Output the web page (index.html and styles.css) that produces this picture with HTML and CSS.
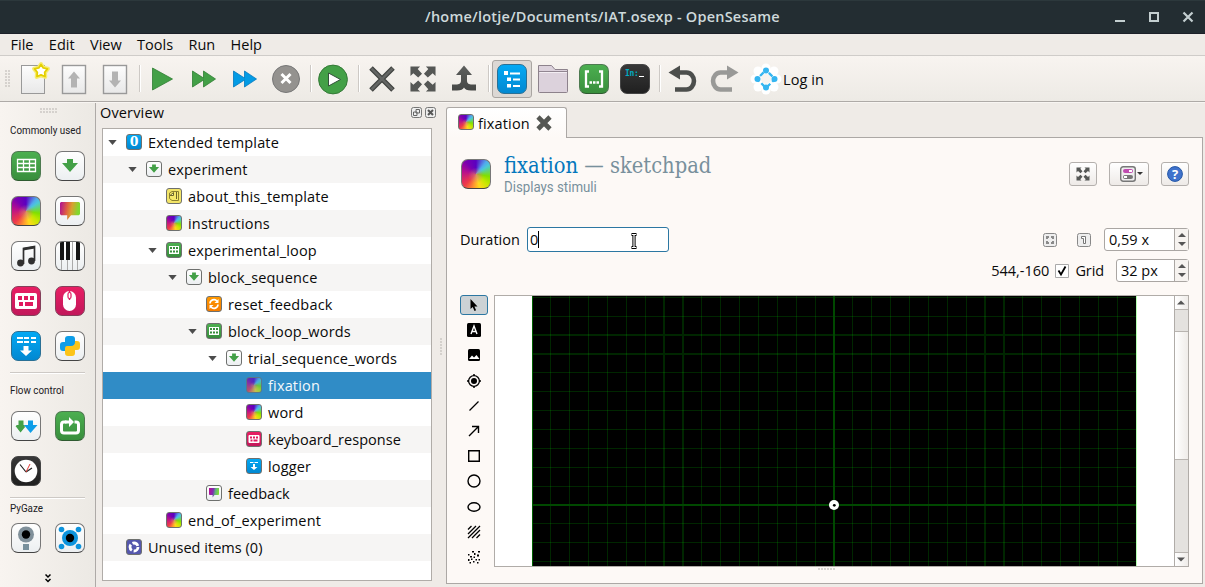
FILE: index.html
```html
<!DOCTYPE html>
<html lang="en">
<head>
<meta charset="utf-8">
<title>OpenSesame</title>
<link rel="stylesheet" href="styles.css">
</head>
<body>
<svg class="defs" width="0" height="0">
  <defs>
    <linearGradient id="steel" x1="0" y1="0" x2="0" y2="1"><stop offset="0" stop-color="#5d5f5d"/><stop offset="1" stop-color="#464846"/></linearGradient>
    <linearGradient id="page" x1="0" y1="0" x2="0" y2="1"><stop offset="0" stop-color="#fdfdfd"/><stop offset="1" stop-color="#e8e8e8"/></linearGradient>
    <symbol id="i-down" viewBox="0 0 28 28"><path d="M11 7h6v4h5l-8 9-8-9h5z" fill="#43a047"/></symbol>
    <symbol id="i-table" viewBox="0 0 28 28"><path d="M5.500 7.500h18v12h-18zM5.500 11.500h18M5.500 15.500h18M11.500 7v12.500M17.500 7v12.500" fill="none" stroke="#fff" stroke-width="1.300"/></symbol>
    <symbol id="i-keys" viewBox="0 0 28 28"><rect x="3" y="6" width="22" height="16" rx="2" fill="#fff"/><path d="M6 9h4v4H6zM12 9h4v4h-4zM18 9h4v4h-4zM7 15h4v4H7zM13 15h8v4h-8z" fill="#e0195e"/></symbol>
    <symbol id="i-log" viewBox="0 0 28 28"><path d="M5 6h6M12 6h5M19 6h5M5 10h6M12 10h5M19 10h5" stroke="#fff" stroke-width="2"/><path d="M11.500 14h5v4.500h3.500l-6 5.500-6-5.500h3.500z" fill="#fff"/></symbol>
    <symbol id="i-expand" viewBox="0 0 28 28"><path d="M1 1h10L8.500 3.500l4.500 5-4 4-5-4.500L1 11zM27 1v10l-3-3-5 4.500-4-4 4.500-5L17 1zM1 27V17l3 3 5-4.500 4 4-4.500 5L11 27zM27 27H17l2.500-2.500-4.500-5 4-4 5 4.500 3-3z" fill="#555755"/></symbol>
    <symbol id="i-tri" viewBox="0 0 10 6"><path d="M0 0h10L5 6z" fill="#4c4c4c"/></symbol>
  </defs>
</svg>

<header class="titlebar">
  <div class="title">/home/lotje/Documents/IAT.osexp - OpenSesame</div>
  <svg class="winbtns" width="80" height="34"><path d="M0 21h10" stroke="#c3ced0" stroke-width="2"/><path d="M35 13h8v8h-8z" fill="none" stroke="#c3ced0" stroke-width="2"/><path d="M68.500 12.500l9 9M77.500 12.500l-9 9" stroke="#c3ced0" stroke-width="2.200"/></svg>
</header>

<nav class="menubar"><span>File</span><span>Edit</span><span>View</span><span>Tools</span><span>Run</span><span>Help</span></nav>

<div class="toolbar">
  <div class="handle dots"></div>
  <svg class="tb" viewBox="0 0 41 38"><rect x="7.500" y="5.500" width="23" height="28" fill="url(#page)" stroke="#999"/><path d="M27 4l2.500 3.800 4.500 1-3 3.600.3 4.600-4.300-1.700-4.300 1.700.3-4.600-3-3.600 4.500-1z" fill="#fffde8" stroke="#f7ec70" stroke-width="4" stroke-linejoin="round"/><path d="M27 4.500l2.300 3.400 4.200 1-2.800 3.400.3 4.200-4-1.600-4 1.600.3-4.200-2.800-3.400 4.200-1z" fill="#fff" stroke="#e4cf00" stroke-width="1.800" stroke-linejoin="round"/></svg>
  <svg class="tb" viewBox="0 0 41 38"><rect x="7.500" y="5.500" width="23" height="28" fill="url(#page)" stroke="#999" stroke-width="1.400"/><path d="M19 11.500l6 7h-3v9h-6v-9h-3z" fill="#b3b3b3"/></svg>
  <svg class="tb" viewBox="0 0 41 38"><rect x="7.500" y="5.500" width="23" height="28" fill="url(#page)" stroke="#999" stroke-width="1.400"/><path d="M19 27.500l6-7h-3v-9h-6v9h-3z" fill="#b3b3b3"/></svg>
  <div class="sep s5"></div>
  <svg class="tb" viewBox="0 0 41 38"><path d="M10.500 8v22l20-11z" fill="#43a047" stroke="#2e7d32" stroke-width=".8"/></svg>
  <svg class="tb" viewBox="0 0 41 38"><path d="M9.500 11v16l11-7v7l12-8-12-8v7z" fill="#43a047" stroke="#2e7d32" stroke-width=".8"/></svg>
  <svg class="tb" viewBox="0 0 41 38"><path d="M9.500 11v16l11-7v7l12-8-12-8v7z" fill="#039be5" stroke="#0277bd" stroke-width=".8"/></svg>
  <svg class="tb" viewBox="0 0 41 38"><circle cx="21" cy="19" r="13.500" fill="#94928f" stroke="#777"/><path d="M16.500 14l9 9M25.500 14l-9 9" stroke="#fff" stroke-width="3"/></svg>
  <div class="sep"></div>
  <svg class="tb" viewBox="0 0 41 38"><circle cx="20" cy="19.500" r="14.400" fill="#43a047" stroke="#357a38"/><path d="M15.500 13v13l12-6.500z" fill="#fff" stroke="#34513b"/></svg>
  <div class="sep"></div>
  <svg class="tb" viewBox="0 0 41 38"><path d="M10 8l22 22M32 8L10 30" stroke="#3e403e" stroke-width="5"/><path d="M10.500 8.500l21 21M31.500 8.500l-21 21" stroke="#636563" stroke-width="2.600"/></svg>
  <svg class="tb" viewBox="0 0 41 38"><use href="#i-expand" x="7.500" y="5.500" width="27" height="27"/></svg>
  <svg class="tb" viewBox="0 0 41 38"><path d="M21 5.500l8 9.500h-5v5.500c0 3 2 4 5 4h4v6h-5c-4 0-6-1-7-3-1 2-3 3-7 3H9v-6h4c3 0 5-1 5-4V15h-5z" fill="url(#steel)"/></svg>
  <div class="sep"></div>
  <div class="tb pressed"><div class="tile blue"><svg viewBox="0 0 28 28"><path d="M6 6h4v4H6zM9 12.500h4v3.500H9zM9 19h4v3.500H9z" fill="#fff"/><path d="M12 8.500h10M15 14.500h7M15 21h7" stroke="#fff" stroke-width="1.800"/></svg></div></div>
  <svg class="tb" viewBox="0 0 41 38"><path d="M6.500 5.500h13l3.500 4h12.500v22q0 1-1 1h-27q-1 0-1-1z" fill="#dcd2dc" stroke="#8d828c"/><path d="M7 11.500h28" stroke="#918691"/><path d="M7.500 12.500h27.500" stroke="#f3eef3"/></svg>
  <div class="tb"><div class="tile green"><svg viewBox="0 0 28 28"><path d="M9 6.500H6v15h3M19 6.500h3v15h-3" fill="none" stroke="#fff" stroke-width="2.300"/><path d="M9.500 17.500h2.500M13 17.500h2.500M16.500 17.500h2.500" stroke="#fff" stroke-width="2.500"/></svg></div></div>
  <div class="tb"><div class="tile black prompt"><span>In:</span><i></i></div></div>
  <div class="sep"></div>
  <svg class="tb" viewBox="0 0 41 38"><path d="M17 12.500h7.500a7 8 0 0 1 0 17H13" fill="none" stroke="#4c4e4c" stroke-width="4.600"/><path d="M6.500 12.500L18 5.500v14z" fill="#4c4e4c"/></svg>
  <svg class="tb" viewBox="0 0 41 38"><path d="M25 12.500h-7.500a7 8 0 0 0 0 17H29" fill="none" stroke="#999997" stroke-width="4.600"/><path d="M35.500 12.500L24 5.500v14z" fill="#999997"/></svg>
  <svg class="tb osf" viewBox="0 0 41 38"><g fill="#fff"><circle cx="22" cy="19" r="11"/><circle cx="22" cy="8" r="4.500"/><circle cx="22" cy="30" r="4.500"/><circle cx="11" cy="19" r="4.500"/><circle cx="33" cy="19" r="4.500"/><circle cx="14" cy="11" r="4.500"/><circle cx="30" cy="11" r="4.500"/><circle cx="14" cy="27" r="4.500"/><circle cx="30" cy="27" r="4.500"/></g><circle cx="22" cy="19" r="5" fill="#f6f3ef"/><path d="M22 10l9 9-9 9-9-9z" fill="none" stroke="#35b5f0" stroke-width="2.300" stroke-dasharray="5 2.700" stroke-dashoffset="-4"/><g fill="#35b5f0"><circle cx="22" cy="10.500" r="3"/><circle cx="22" cy="27.500" r="3"/><circle cx="13.500" cy="19" r="3"/><circle cx="30.500" cy="19" r="3"/></g></svg>
  <span class="login">Log in</span>
</div>

<main class="body">
  <aside class="toolbox">
    <div class="dots wide"></div>
    <div class="label"><span>Commonly used</span></div>
    <div class="tiles">
      <div class="tile green"><svg viewBox="0 0 28 28"><use href="#i-table"/></svg></div>
      <div class="tile white"><svg viewBox="0 0 28 28"><use href="#i-down"/></svg></div>
      <div class="tile rainbow"></div>
      <div class="tile white"><div class="bubble"></div></div>
      <div class="tile white"><svg viewBox="0 0 28 28"><path d="M11.500 22V6.500l11-2V19" fill="none" stroke="#303030" stroke-width="1.700"/><path d="M11 6l12-2v2.500L11 8.500z" fill="#303030"/><circle cx="8.500" cy="21" r="3.400" fill="#303030"/><circle cx="19.500" cy="19" r="3.400" fill="#303030"/></svg></div>
      <div class="tile white"><svg viewBox="0 0 28 28"><path d="M5.500 18v10M11.500 18v10M16.500 0v28M21.500 18v10" stroke="#aaa"/><path d="M4 0h4v18H4zM10 0h4v18h-4zM20 0h4v18h-4z" fill="#151515"/></svg></div>
      <div class="tile pink"><svg viewBox="0 0 28 28"><use href="#i-keys"/></svg></div>
      <div class="tile pink"><svg viewBox="0 0 28 28"><rect x="7" y="4" width="13" height="20" rx="6.500" fill="#fff"/><path d="M13.500 3v10" stroke="#e0195e" stroke-width="1.400"/><rect x="12" y="5.500" width="3" height="6" rx="1.500" fill="#fff" stroke="#e0195e" stroke-width="1.200"/></svg></div>
      <div class="tile blue"><svg viewBox="0 0 28 28"><use href="#i-log"/></svg></div>
      <div class="tile white"><svg viewBox="0 0 28 28"><path d="M9 7q0-3 3-3h4q3 0 3 3v5q0 2-2 2h-3q-2 0-2 2v3H7q-3 0-3-3v-3q0-3 3-3h2z" fill="#0d9de8"/><path d="M19 9h2q3 0 3 3v3q0 3-3 3h-2v3q0 3-3 3h-4q-3 0-3-3v-5q0-2 2-2h4q4 0 4-4z" fill="#fcc419"/></svg></div>
    </div>
    <hr>
    <div class="label flow"><span>Flow control</span></div>
    <div class="tiles">
      <div class="tile white"><svg viewBox="0 0 28 28"><path d="M6.500 8.500h5V14l2 .500-5 6-5-6.500h3z" fill="#43a047"/><path d="M4 13h9l-4.500 7z" fill="#43a047"/><path d="M16 8.500h5V13h4.500L18.500 21l-6.500-8h4z" fill="#0d9de8"/></svg></div>
      <div class="tile green"><svg viewBox="0 0 28 28"><path d="M10.500 10H8q-2.500 0-2.500 2.500v6Q5.500 21 8 21h12q2.500 0 2.500-2.500v-6Q22.500 10 20 10h-1.500" fill="none" stroke="#fff" stroke-width="3"/><path d="M9 8.500h4V5l5 5-5 5v-3.500H9z" fill="#fff"/></svg></div>
      <div class="tile black"><svg viewBox="0 0 28 28"><circle cx="14" cy="14" r="11.300" fill="#fff"/><path d="M14 15L8 7.500M14 15l6-4" stroke="#222" stroke-width="1.200"/><path d="M14 15l4-8" stroke="#e53935"/></svg></div>
    </div>
    <hr class="second">
    <div class="label pygaze"><span>PyGaze</span></div>
    <div class="tiles">
      <div class="tile white"><svg viewBox="0 0 28 28"><circle cx="14" cy="10.500" r="8" fill="#80909a"/><circle cx="14" cy="10.500" r="4.200"/><path d="M11 20h6v6h-6z" fill="#78909c"/></svg></div>
      <div class="tile white"><svg viewBox="0 0 28 28"><g fill="#0d93dc"><circle cx="14" cy="14" r="8"/><circle cx="5.500" cy="5.500" r="2.800"/><circle cx="22.500" cy="5.500" r="2.800"/><circle cx="5.500" cy="22.500" r="2.800"/><circle cx="22.500" cy="22.500" r="2.800"/></g><circle cx="14" cy="14" r="4.200"/></svg></div>
    </div>
    <svg class="more" width="6" height="9"><path d="M.5 .5L3 3 5.500 .5M.5 5L3 7.500 5.500 5" fill="none" stroke="#000" stroke-width="1.500"/></svg>
  </aside>

  <section class="overview">
    <div class="dock"><span>Overview</span>
      <svg width="26" height="12"><g fill="#eee" stroke="#777"><rect x=".5" y=".5" width="10" height="10" rx="2"/><rect x="14.500" y=".5" width="10" height="10" rx="2"/></g><path d="M5 2.500h3.500V6H5zM2.500 5H6v3.500H2.500z" fill="none" stroke="#666"/><path d="M17 3l5 5M22 3l-5 5" stroke="#555" stroke-width="2"/></svg>
    </div>
    <div class="tree">
      <div class="row l0"><svg class="tri"><use href="#i-tri"/></svg><div class="mini blue"><b>0</b></div><span>Extended template</span></div>
      <div class="row l1"><svg class="tri"><use href="#i-tri"/></svg><div class="mini white"><svg viewBox="3 3 22 22"><use href="#i-down" width="28" height="28"/></svg></div><span>experiment</span></div>
      <div class="row l2"><i class="tri"></i><div class="mini note"><svg viewBox="0 0 14 14"><path d="M2.500 4L5 2.500h6.500v9H5L2.500 9.500z" fill="#f6e96b" stroke="#8c812f"/><path d="M3 6.500l3.500-3v3zM9.500 3v7" fill="#fff9b0" stroke="#6d6528"/></svg></div><span>about_this_template</span></div>
      <div class="row l2"><i class="tri"></i><div class="mini rainbow"></div><span>instructions</span></div>
      <div class="row l2"><svg class="tri"><use href="#i-tri"/></svg><div class="mini green"><svg viewBox="0 0 14 14"><path d="M2 3h10v8H2z" fill="#fff"/><path d="M3 4h2v2H3zM6 4h2v2H6zM9 4h2v2H9zM3 7.500h2v2H3zM6 7.500h2v2H6zM9 7.500h2v2H9z" fill="#388e3c"/></svg></div><span>experimental_loop</span></div>
      <div class="row l3"><svg class="tri"><use href="#i-tri"/></svg><div class="mini white"><svg viewBox="3 3 22 22"><use href="#i-down" width="28" height="28"/></svg></div><span>block_sequence</span></div>
      <div class="row l4"><i class="tri"></i><div class="mini orange"><svg viewBox="0 0 14 14"><path d="M3 6.500A4 4 0 0 1 10 4M11 7.500A4 4 0 0 1 4 10" fill="none" stroke="#fff" stroke-width="1.600"/><path d="M11.500 2v4h-4zM2.500 12V8h4z" fill="#fff"/></svg></div><span>reset_feedback</span></div>
      <div class="row l4"><svg class="tri"><use href="#i-tri"/></svg><div class="mini green"><svg viewBox="0 0 14 14"><path d="M2 3h10v8H2z" fill="#fff"/><path d="M3 4h2v2H3zM6 4h2v2H6zM9 4h2v2H9zM3 7.500h2v2H3zM6 7.500h2v2H6zM9 7.500h2v2H9z" fill="#388e3c"/></svg></div><span>block_loop_words</span></div>
      <div class="row l5"><svg class="tri"><use href="#i-tri"/></svg><div class="mini white"><svg viewBox="3 3 22 22"><use href="#i-down" width="28" height="28"/></svg></div><span>trial_sequence_words</span></div>
      <div class="row l6 selected"><i class="tri"></i><div class="mini rainbow"></div><span>fixation</span></div>
      <div class="row l6"><i class="tri"></i><div class="mini rainbow"></div><span>word</span></div>
      <div class="row l6"><i class="tri"></i><div class="mini pink"><svg viewBox="0 0 28 28"><use href="#i-keys"/></svg></div><span class="tight">keyboard_response</span></div>
      <div class="row l6"><i class="tri"></i><div class="mini blue"><svg viewBox="0 0 14 14"><path d="M3 3.500h3.500M7.500 3.500H11" stroke="#fff"/><path d="M6 5h2v3h2.500L7 11 3.500 8H6z" fill="#fff"/></svg></div><span>logger</span></div>
      <div class="row l4"><i class="tri"></i><div class="mini white"><div class="bubble small"></div></div><span class="tight">feedback</span></div>
      <div class="row l2"><i class="tri"></i><div class="mini rainbow"></div><span>end_of_experiment</span></div>
      <div class="row l0"><i class="tri"></i><div class="mini indigo"><svg viewBox="0 0 14 14"><circle cx="7" cy="7" r="4" fill="none" stroke="#fff" stroke-width="2.800" stroke-dasharray="6.500 1.880"/></svg></div><span class="tight">Unused items (0)</span></div>
    </div>
  </section>

  <div class="splitter"><div class="dots"></div></div>

  <section class="editor">
    <div class="tab"><div class="mini rainbow"></div><span>fixation</span><svg width="16" height="16"><path d="M2 2l12 12M14 2L2 14" stroke="#555753" stroke-width="4.600"/></svg></div>
    <div class="pane">
      <div class="head">
        <div class="tile rainbow"></div>
        <div class="heading">
          <h1><b>fixation</b> — sketchpad</h1>
          <p>Displays stimuli</p>
        </div>
        <div class="btn"><svg width="14" height="14"><use href="#i-expand"/></svg></div>
        <div class="btn drop"><svg width="31" height="16"><rect x=".7" y=".7" width="14.600" height="14.600" rx="2.500" fill="#eee" stroke="#777" stroke-width="1.400"/><rect x="3" y="3" width="10" height="4" rx="2" fill="#c04cb0"/><rect x="9" y="4" width="3" height="2" fill="#fff"/><rect x="3" y="9" width="10" height="4" rx="2" fill="#777"/><rect x="4" y="10" width="3" height="2" fill="#fff"/><path d="M17 6h6l-3 3z" fill="#333"/></svg></div>
        <div class="btn"><svg width="16" height="16"><circle cx="8" cy="8" r="7.400" fill="#3f72cc" stroke="#2457a6"/><text x="8" y="13" text-anchor="middle" class="q">?</text></svg></div>
      </div>
      <div class="line1">
        <span class="dur">Duration</span>
        <div class="input"><span>0</span><i></i><svg class="ibeam" width="8" height="16"><path d="M1.500 1.500H6.500M1.500 14.500H6.500M4 2v12" stroke="#000" stroke-width="3.200"/><path d="M2 1.500h4M2 14.500h4M4 2v12" stroke="#fff" stroke-width="1.200"/></svg></div>
        <div class="grow"></div>
        <svg class="fit" width="14" height="14"><rect x=".5" y=".5" width="13" height="13" rx="2" fill="#eee" stroke="#888"/><path d="M3 3h3v3H3zM8 3h3v3H8zM3 8h3v3H3zM8 8h3v3H8z" fill="#8a8a8a"/><path d="M5 5h1v1H5zM8 5h1v1H8zM5 8h1v1H5zM8 8h1v1H8z" fill="#eee"/></svg>
        <svg class="one" width="14" height="14"><rect x=".5" y=".5" width="13" height="13" rx="2" fill="#eee" stroke="#888"/><path d="M4.500 3.500h4v7h-2v-5h-2z" fill="#fff" stroke="#777"/></svg>
        <div class="spin zoomspin"><span>0,59 x</span><div class="arrows"><svg><path d="M4 8h8L8 4zM4 13h8l-4 4z"/></svg></div></div>
      </div>
      <div class="line2">
        <span>544,-160</span>
        <svg width="14" height="14"><path d="M.5 .5h13v13H.5z" fill="#fff" stroke="#aaa"/><path d="M3.500 6.500L6 10.500 10.500 2.500" fill="none" stroke="#000" stroke-width="1.800"/></svg>
        <span class="gridlabel">Grid</span>
        <div class="spin"><span>32 px</span><div class="arrows"><svg><path d="M4 8h8L8 4zM4 13h8l-4 4z"/></svg></div></div>
      </div>
      <div class="work">
        <div class="tools">
          <div class="tool on"><svg viewBox="0 0 14 14"><path d="M3.500 1v10l2.200-2 1.800 4 1.600-.7L7.400 8.500h3.100z"/></svg></div>
          <div class="tool"><svg viewBox="0 0 14 14"><rect width="14" height="14" rx="1.500"/><path d="M4 11L7 3l3 8M5 8.500h4" fill="none" stroke="#fff" stroke-width="1.400"/></svg></div>
          <div class="tool"><svg viewBox="0 0 14 14"><rect x="1" y="1" width="12" height="12" rx="1.500"/><path d="M2 11l3-3.500 2 2L9.500 7l3 4z" fill="#fff"/></svg></div>
          <div class="tool"><svg viewBox="0 0 14 14"><circle cx="7" cy="7" r="5.400" fill="none" stroke="#000" stroke-width="1.300"/><circle cx="7" cy="7" r="3"/><path d="M7 0v2M7 12v2M0 7h2M12 7h2" stroke="#000" stroke-width="1.500"/></svg></div>
          <div class="tool"><svg viewBox="0 0 14 14"><path d="M2.500 11.500l9-9" stroke="#000" stroke-width="1.300"/></svg></div>
          <div class="tool"><svg viewBox="0 0 14 14"><path d="M2 12L11.500 2.500M5 2.500h6.500V9" fill="none" stroke="#000" stroke-width="1.400"/></svg></div>
          <div class="tool"><svg viewBox="0 0 14 14"><path d="M1.700 1.700h10.600v10.600H1.700z" fill="none" stroke="#000" stroke-width="1.400"/></svg></div>
          <div class="tool"><svg viewBox="0 0 14 14"><circle cx="7" cy="7" r="6" fill="none" stroke="#000" stroke-width="1.400"/></svg></div>
          <div class="tool"><svg viewBox="0 0 14 14"><ellipse cx="7" cy="7" rx="6" ry="4.300" fill="none" stroke="#000" stroke-width="1.400"/></svg></div>
          <div class="tool"><svg viewBox="0 0 14 14"><path d="M1 4.500L4.500 1M1 9l8-8M1 13L13 1M5 13l8-8M9.500 13L13 9.500" stroke="#000" stroke-width="1.300"/></svg></div>
          <div class="tool"><svg viewBox="0 0 14 14"><path d="M1 4h1.500v1.500H1zM5 1h2v1.500H5zM7 3h1.500v2H7zM11 1h2v1.500h-2zM3 6h2v1.500H3zM10 4.500h2v2h-2zM6.500 6.500H8V8H6.500zM1 9h1.500v2H1zM4 8.500h1.500V10H4zM8.500 9H10v1.500H8.500zM11.500 9H13v1.500h-1.500zM6 11h1.500v1.500H6zM2.500 12H4v1.500H2.500zM10 12h1.500v1.500H10z"/></svg></div>
        </div>
        <div class="view">
          <svg class="canvas" width="679" height="270" viewBox="495 296 679 270" shape-rendering="crispEdges">
            <rect x="495" y="296" width="679" height="270" fill="#fff"/>
            <rect x="532" y="296" width="604" height="270"/>
            <path d="M550.500 296v270M569.500 296v270M588.500 296v270M607.500 296v270M626.500 296v270M645.500 296v270M701.500 296v270M720.500 296v270M739.500 296v270M758.500 296v270M777.500 296v270M796.500 296v270M815.500 296v270M852.500 296v270M871.500 296v270M890.500 296v270M909.500 296v270M928.500 296v270M947.500 296v270M966.500 296v270M1022.500 296v270M1041.500 296v270M1060.500 296v270M1079.500 296v270M1098.500 296v270M1117.500 296v270" stroke="#00ff00" stroke-opacity=".15"/>
            <path d="M532 297.500h604M532 316.500h604M532 372.500h604M532 391.500h604M532 410.500h604M532 429.500h604M532 448.500h604M532 467.500h604M532 486.500h604M532 523.500h604M532 542.500h604M532 561.500h604" stroke="#00ff00" stroke-opacity=".15"/>
            <path d="M664 296v270M683 296v270M985 296v270M1004 296v270M532 335h604M532 354h604" stroke="#00ff00" stroke-opacity=".15" stroke-width="2"/>
            <path d="M834 296v270M532 505h604" stroke="#004800" stroke-width="2"/>
            <path d="M532.500 296v270" stroke="#006000"/><path d="M1136.500 296v270" stroke="#b4ffb0"/>
            <circle cx="834" cy="505" r="5" fill="#fff" shape-rendering="auto"/><circle cx="834.300" cy="505.300" r="1.400" shape-rendering="auto"/>
          </svg>
          <div class="scroll">
            <svg class="up" width="13" height="13"><path d="M2 8.500h8L6 4.500z" fill="#555"/></svg>
            <div class="gap"></div><div class="thumb"></div><div class="trough"></div>
            <svg class="down" width="13" height="13"><path d="M2 4.500h8L6 8.500z" fill="#555"/></svg>
          </div>
        </div>
      </div>
      <div class="dots bottom"></div>
    </div>
  </section>
</main>
</body>
</html>
```
FILE: styles.css
```css
* { box-sizing: border-box; }
html, body { margin: 0; height: 587px; overflow: hidden; }
body {
  display: flex; flex-direction: column; width: 1205px;
  background: #efebe7; color: #0a0a0a;
  font: 14.5px/20px "Open Sans", "Noto Sans", sans-serif;
}
svg { display: block; flex: none; }
.defs { position: absolute; }
.dots { background-image: radial-gradient(circle at 1px 1px, #c6c2be .6px, transparent .9px); background-size: 3px 3px; }

.titlebar { height: 34px; flex: none; display: flex; background: #232d32; border-top: 1px solid #2c383c; border-bottom: 1px solid #1c2029; color: #ced9db; }
.title { width: 1085px; padding-left: 120px; text-align: center; font-weight: 600; line-height: 32px; font-size: 14.5px; letter-spacing: .21px; }
.winbtns { margin: -1px 0 0 30px; }

.menubar { height: 22px; flex: none; display: flex; gap: 15.4px; padding-left: 10.5px; border-bottom: 1px solid #cfccc9; line-height: 21px; }

.toolbar { height: 46px; flex: none; display: flex; align-items: center; background: linear-gradient(#f8f4f0, #edeae5); border-bottom: 1px solid #aeaaa7; }
.handle { width: 5px; height: 17px; margin: 0 4px 0 5px; }
.tb { width: 41px; height: 38px; flex: none; }
div.tb { display: flex; align-items: center; justify-content: center; padding: 1px 0 0 1px; }
div.pressed { border: 1px solid #a9a5a1; border-radius: 3px; background: #dcd8d4; width: 40px; margin-left: 1px; padding: 1px 0 0; }
.sep { width: 7px; height: 27px; flex: none; background: linear-gradient(90deg, transparent 4px, #cdc9c5 4px, #cdc9c5 5px, #fff 5px, #fff 6px, transparent 6px); }
.s5 { width: 5px; background: linear-gradient(90deg, transparent 2px, #cdc9c5 2px, #cdc9c5 3px, #fff 3px, #fff 4px, transparent 4px); }
.login { margin-left: -2px; letter-spacing: .1px; padding-top: 2px; }

.tile { width: 30px; height: 30px; border: 1px solid #777; border-bottom-color: #444; border-radius: 7px; overflow: hidden; flex: none; }
.tile svg { width: 28px; height: 28px; }
.white { background: linear-gradient(#fff, #eceff1); }
.green { background: linear-gradient(#4caf50, #388e3c); border-color: #4d7a50; border-bottom-color: #2e5a30; }
.blue { background: linear-gradient(#03a9f4, #0288d1); border-color: #2a7095; }
.pink { background: linear-gradient(#e91e63, #c2185b); border-color: #84405a; }
.black { background: linear-gradient(#383838, #202020); border-color: #444; }
.orange { background: linear-gradient(#ff9800, #f57c00); }
.note { background: #f3e568; }
.indigo { background: #5557ad; }
.rainbow {
  background:
    radial-gradient(circle at 50% 55%, rgba(205, 120, 120, .75), rgba(205, 120, 120, 0) 38%),
    conic-gradient(#5a00c0, #52a8ee 40deg, #4cc8d8 55deg, #80e000 100deg, #c4e800 130deg, #ffd81c 165deg, #ff9a30 190deg, #ee3a4a 225deg, #b8108c 280deg, #7a00b0 320deg, #5a00c0);
}
.bubble {
  width: 20px; height: 18px; margin: 5px 0 0 4px;
  background: linear-gradient(100deg, #b4188a 5%, #e06040 35%, #d8a030 55%, #80d830 85%);
  clip-path: polygon(5% 0, 95% 0, 100% 6%, 100% 67%, 95% 74%, 55% 74%, 36% 100%, 36% 74%, 5% 74%, 0 67%, 0 6%);
}
.bubble.small { width: 10px; height: 10px; margin: 2px; background: linear-gradient(100deg, #b0109a 10%, #7a30b0 40%, #60b080 60%, #80e030 90%); }
.prompt { display: flex; color: #00acc1; font: bold 8px/10px "DejaVu Sans Mono", monospace; padding: 4px 0 0 4px; letter-spacing: -.3px; }
.prompt i { width: 5px; height: 1px; background: #fff; margin-top: 7px; }

.body { flex: 1; display: flex; min-height: 0; border-top: 1px solid #f8f5f2; }
.toolbox { width: 96px; flex: none; border-right: 1px solid #aeaaa7; background: linear-gradient(90deg, #f8f4f0, #ece9e4); padding: 5px 10px 0 11px; }
.dots.wide { width: 17px; height: 5px; margin-left: 29px; }
.label { height: 16px; margin: 9px 0 13px -1px; line-height: 16px; font-family: Roboto, sans-serif; font-size: 11.5px; color: #1b2024; white-space: nowrap; }
.label span { display: inline-block; transform: scaleX(.855); transform-origin: 0 0; }
.tiles { display: grid; grid-template-columns: 30px 30px; gap: 15px 14px; }
hr { border: 0; height: 2px; margin: 11px 0 0 -1px; background: linear-gradient(#cdc9c5 50%, #fff 50%); }
.label.flow { margin: 8px 0 13px -1px; }
.label.pygaze { margin: 1px 0 7px -1px; }
.more { margin: 21px 0 0 34px; }

.overview { width: 344px; flex: none; padding: 0 8px 0 4px; }
.dock { height: 25px; display: flex; justify-content: space-between; line-height: 20px; letter-spacing: .15px; }
.dock svg { margin: 4px -5px 0 0; }
.tree { margin-left: 2px; width: 330px; height: 453px; border: 1px solid #b0aca8; background: #fff; }
.row { height: 27px; display: flex; align-items: center; gap: 6px; line-height: 26px; white-space: nowrap; }
.row:nth-child(even) { background: #f6f5f4; }
.row span { font-size: 14.5px; letter-spacing: .17px; }
.row .tight { letter-spacing: .03px; }
.row .mini { position: relative; top: -1px; }
.tri { width: 9px; height: 5px; margin-right: 3px; flex: none; }
.l0 { padding-left: 5px; } .l1 { padding-left: 25px; } .l2 { padding-left: 45px; } .l3 { padding-left: 65px; }
.l4 { padding-left: 85px; } .l5 { padding-left: 105px; } .l6 { padding-left: 125px; }
.row.selected { background: #308cc6; color: #f4f8fb; }
.selected .mini { opacity: .7; }
.mini { width: 16px; height: 16px; border: 1px solid #6e706e; border-radius: 3px; overflow: hidden; flex: none; }
.mini svg { width: 14px; height: 14px; }
.mini b { display: block; color: #fff; font: bold 14px/14px "Liberation Serif", serif; text-align: center; transform: scaleX(1.25); }

.splitter { width: 6px; flex: none; padding: 235px 0 0 0; }
.splitter .dots { width: 2px; height: 17px; }

.editor { width: 757px; flex: none; padding-top: 4px; }
.tab { width: 121px; height: 31px; display: flex; align-items: center; gap: 4px; padding-left: 11px; border: 1px solid #aca8a5; border-bottom: 0; border-radius: 3px 3px 0 0; background: linear-gradient(#fff, #fdf9f6); position: relative; margin-bottom: -1px; letter-spacing: .15px; }
.tab .mini { margin-bottom: 2px; }
.tab svg { margin-left: 2px; }
.tab span { padding-top: 2px; }
.pane { height: 447px; border: 1px solid #aca8a5; background: #fdf9f6; padding: 21px 13px 0; }
.head { display: flex; align-items: flex-start; height: 68px; }
.head .tile { margin-left: 1px; }
.heading { margin: -6px 0 0 13px; flex: 1; }
h1 { margin: 0; font: 21.7px/26px "DejaVu Serif Condensed", "DejaVu Serif", serif; color: #78909c; white-space: nowrap; }
h1 b { font-weight: 400; color: #0277bd; }
p { margin: 0; font: 14.5px/18px Roboto, sans-serif; color: #78909c; transform: scaleX(.915); transform-origin: 0 0; }
.btn { width: 28px; height: 24px; margin: 3px 0 0 12px; display: flex; align-items: center; justify-content: center; border: 1px solid #b4b0ad; border-radius: 3px; background: linear-gradient(#fff, #eeeae7); }
.btn.drop { width: 40px; padding-left: 12px; }
.q { font: bold 13px "Open Sans", sans-serif; fill: #fff; }
.line1 { display: flex; height: 25px; align-items: center; }
.dur { width: 67px; }
.input { width: 142px; height: 25px; border: 1px solid #2c77a2; border-radius: 3px; background: #fff; display: flex; align-items: center; padding-left: 2px; }
.input i { width: 1px; height: 17px; background: #000; }
.ibeam { margin: 2px 0 0 91px; }
.grow { flex: 1; }
.fit { margin-right: 20px; }
.one { margin-right: 13px; }
.spin { display: flex; height: 23px; width: 73px; border: 1px solid #aaa6a3; border-radius: 3px; background: #fff; padding-left: 4px; line-height: 21px; justify-content: space-between; white-space: nowrap; }
.zoomspin { width: 85px; }
.arrows { width: 14px; border-left: 1px solid #aaa6a3; background: #f6f3f0; }
.arrows svg { width: 13px; height: 21px; margin-left: -1.5px; fill: #555; }
.line2 { display: flex; justify-content: flex-end; align-items: center; height: 37px; gap: 6px; }
.gridlabel { margin-right: 6px; letter-spacing: -.1px; }
.work { display: flex; height: 272px; margin-top: 6px; }
.tools { width: 34px; flex: none; }
.tool { width: 28px; height: 20px; margin-bottom: 5.2px; display: flex; align-items: center; justify-content: center; }
.tool svg { width: 14px; height: 14px; }
.tool.on { border: 1px solid #2c77a2; border-radius: 3px; background: #ccd2d5; }
.view { display: flex; border: 1px solid #b0aca8; width: 695px; height: 272px; }
.scroll { width: 14px; border-left: 1px solid #b0aca8; display: flex; flex-direction: column; background: linear-gradient(90deg, #fff, #efece9); }
.gap { height: 23px; background: #e4e2df; border: 1px solid #b8b4b0; border-width: 1px 0; }
.thumb { height: 127px; }
.trough { flex: 1; background: #e4e2df; border: 1px solid #b8b4b0; border-width: 1px 0; }
.bottom { width: 17px; height: 2px; margin: 1px 0 0 358px; }
```
